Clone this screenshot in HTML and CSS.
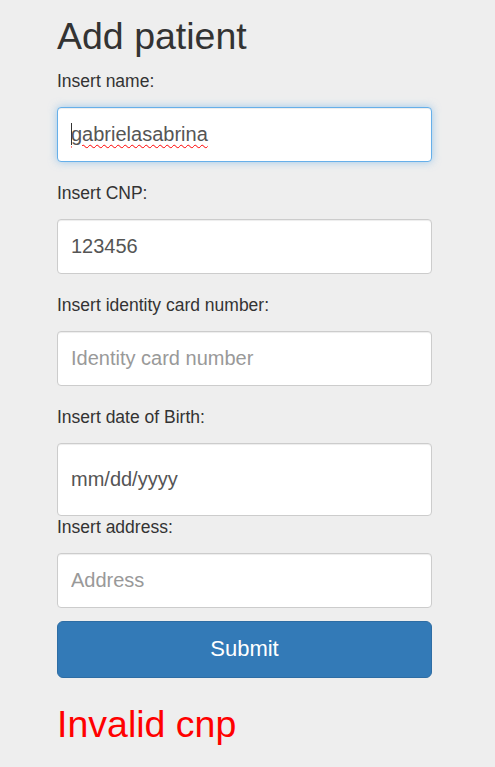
FILE: index.html
```html
<!DOCTYPE html>
<html>
<head>
<meta charset="utf-8">
<link rel="stylesheet" href="styles.css">
</head>
<body>
<div class="container">
  <h1 class="title">Add patient</h1>
  <form class="form">
    <div class="group">
      <label class="label">Insert name:</label>
      <div class="field field-focus"><span class="caret"></span><span class="misspelled">gabrielasabrina</span></div>
    </div>
    <div class="group">
      <label class="label">Insert CNP:</label>
      <input class="field" type="text" value="123456">
    </div>
    <div class="group">
      <label class="label">Insert identity card number:</label>
      <input class="field" type="text" placeholder="Identity card number">
    </div>
    <div class="group group-tight">
      <label class="label">Insert date of Birth:</label>
      <input class="field field-date" type="text" value="mm/dd/yyyy">
    </div>
    <div class="group group-last">
      <label class="label">Insert address:</label>
      <input class="field" type="text" placeholder="Address">
    </div>
    <button class="submit" type="button">Submit</button>
  </form>
  <p class="error">Invalid cnp</p>
</div>
</body>
</html>
```
FILE: styles.css
```css
html, body {
  margin: 0;
  padding: 0;
  background: #eeeeee;
}
body {
  font-family: "Liberation Sans", Arial, sans-serif;
  color: #333333;
}
.container {
  width: 375px;
  padding: 15.5px 0 0 57px;
}
.title {
  margin: 0 0 13px 0;
  font-size: 37.5px;
  line-height: 41px;
  font-weight: 400;
  color: #333333;
}
.form {
  display: flex;
  flex-direction: column;
}
.group {
  display: flex;
  flex-direction: column;
  margin-bottom: 20px;
}
.group-tight {
  margin-bottom: 0;
}
.group-last {
  margin-bottom: 13px;
}
.label {
  font-size: 17.5px;
  line-height: 23px;
  margin-bottom: 14px;
  color: #333333;
}
.field {
  box-sizing: border-box;
  width: 375px;
  height: 55px;
  margin: 0;
  padding: 0 13px;
  border: 1px solid #cccccc;
  border-radius: 4px;
  background: #ffffff;
  font-family: "Liberation Sans", Arial, sans-serif;
  font-size: 20px;
  color: #555555;
  box-shadow: inset 0 1px 1px rgba(0,0,0,0.075);
  outline: none;
}
.field::placeholder {
  color: #999999;
}
.field-focus {
  display: flex;
  align-items: center;
  border-color: #66afe9;
  box-shadow: inset 0 1px 1px rgba(0,0,0,0.075), 0 0 8px rgba(102,175,233,0.6);
}
.caret {
  width: 1px;
  height: 22px;
  background: #333333;
  margin-right: -1px;
}
.misspelled {
  text-decoration: underline wavy #ff0000;
  text-decoration-thickness: 1px;
  text-underline-offset: 3px;
}
.field-date {
  height: 73px;
}
.submit {
  box-sizing: border-box;
  width: 375px;
  height: 57px;
  margin: 0;
  border: 1px solid #2e6da4;
  border-radius: 6px;
  background: #337ab7;
  color: #ffffff;
  font-family: "Liberation Sans", Arial, sans-serif;
  font-size: 22px;
}
.error {
  margin: 25px 0 0 0;
  font-size: 37.5px;
  line-height: 42px;
  color: #ff0000;
}
```
